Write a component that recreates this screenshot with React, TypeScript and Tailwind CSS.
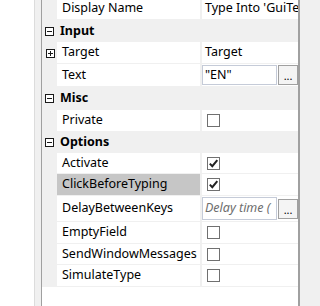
import React from "react";

type Row =
  | { kind: "group"; label: string; h: number }
  | {
      kind: "prop";
      label: string;
      h: number;
      value?: string;
      check?: boolean;
      box?: string;
      placeholder?: boolean;
      expand?: boolean;
      selected?: boolean;
    };

const rows: Row[] = [
  { kind: "prop", label: "Display Name", h: 22, value: "Type Into 'GuiText" },
  { kind: "group", label: "Input", h: 22 },
  { kind: "prop", label: "Target", h: 22, value: "Target", expand: true },
  { kind: "prop", label: "Text", h: 23, box: "\"EN\"" },
  { kind: "group", label: "Misc", h: 23 },
  { kind: "prop", label: "Private", h: 22, check: false },
  { kind: "group", label: "Options", h: 21 },
  { kind: "prop", label: "Activate", h: 21, check: true },
  { kind: "prop", label: "ClickBeforeTyping", h: 22, check: true, selected: true },
  { kind: "prop", label: "DelayBetweenKeys", h: 26, box: "Delay time (", placeholder: true },
  { kind: "prop", label: "EmptyField", h: 22, check: false },
  { kind: "prop", label: "SendWindowMessages", h: 21, check: false },
  { kind: "prop", label: "SimulateType", h: 22, check: false },
];

function ToggleBox({ plus }: { plus?: boolean }) {
  return (
    <svg width="9" height="9" viewBox="0 0 9 9" className="shrink-0">
      <rect x="0.5" y="0.5" width="8" height="8" fill="white" stroke="#1a1a1a" />
      <line x1="2" y1="4.5" x2="7" y2="4.5" stroke="#1a1a1a" />
      {plus && <line x1="4.5" y1="2" x2="4.5" y2="7" stroke="#1a1a1a" />}
    </svg>
  );
}

function CheckBox({ checked }: { checked: boolean }) {
  return (
    <div className="flex h-[13px] w-[13px] items-center justify-center border border-[#707070] bg-white">
      {checked && (
        <svg width="11" height="11" viewBox="0 0 11 11">
          <path d="M1.8 5.6 L4.3 8.2 L9.3 2.2" fill="none" stroke="#222" strokeWidth="2" />
        </svg>
      )}
    </div>
  );
}

export default function App() {
  return (
    <div
      className="flex h-[306px] w-[320px] overflow-hidden bg-white text-[12.5px] text-black"
      style={{ fontFamily: '"Noto Sans", "Open Sans", sans-serif' }}
    >
      {/* LEFT FRAME */}
      <div className="w-[34px] shrink-0 bg-white" />
      <div className="w-[7px] shrink-0 border-l border-[#dcdcdc] bg-[#f0f0f0]" />
      <div className="w-px shrink-0 bg-[#a0a0a0]" />

      {/* GRID */}
      <div className="-mt-[2px] flex w-[256px] shrink-0 flex-col">
        {rows.map((row) =>
          row.kind === "group" ? (
            <div
              key={row.label}
              className="flex items-center bg-[#f0f0f0] pl-[3px]"
              style={{ height: row.h }}
            >
              <ToggleBox />
              <span className="ml-[6px] font-bold">{row.label}</span>
            </div>
          ) : (
            <div key={row.label} className="flex" style={{ height: row.h }}>
              <div className="flex w-[15px] shrink-0 items-center bg-[#f0f0f0] pl-[4px]">
                {row.expand && <ToggleBox plus />}
              </div>
              <div
                className={`flex w-[143px] shrink-0 items-center overflow-hidden whitespace-nowrap border-b border-[#f0f0f0] pl-[5px] ${
                  row.selected ? "bg-[#c6c6c6]" : "bg-white"
                }`}
              >
                {row.label}
              </div>
              <div className="flex flex-1 items-center overflow-hidden whitespace-nowrap border-b border-l-2 border-[#f0f0f0] bg-white">
                {row.value !== undefined && <span className="pl-[3px]">{row.value}</span>}
                {row.check !== undefined && (
                  <div className="pl-[5px]">
                    <CheckBox checked={row.check} />
                  </div>
                )}
                {row.box !== undefined && (
                  <div className="flex h-full w-full items-center py-[1px]">
                    <div className="flex h-full w-[76px] items-center overflow-hidden border border-[#c5cbd8] pl-[2px]">
                      <span className={row.placeholder ? "italic text-[#6d6d6d]" : ""}>{row.box}</span>
                    </div>
                    <div className="ml-px flex h-[20px] w-[20px] items-end justify-center border border-[#a0a0a0] bg-[#f4f4f4] pb-[3px] text-[11px] leading-none">
                      ...
                    </div>
                  </div>
                )}
              </div>
            </div>
          ),
        )}
      </div>

      {/* RIGHT FRAME */}
      <div className="w-[2px] shrink-0 bg-[#a0a0a0]" />
      <div className="flex-1 bg-[#f0f0f0]" />
    </div>
  );
}
